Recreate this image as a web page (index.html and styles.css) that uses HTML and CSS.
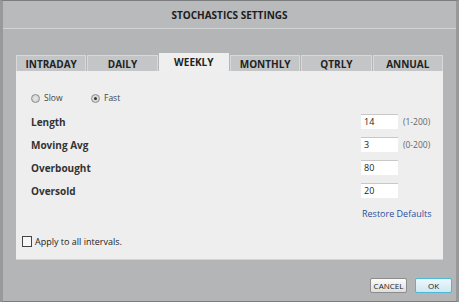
FILE: index.html
```html
<!DOCTYPE html>
<html lang="en">
<head>
    <meta charset="UTF-8">
    <title>Stochastics Settings</title>
    <link rel="stylesheet" href="styles.css">
</head>
<body>
    <div class="dialog">
        <div class="titlebar">STOCHASTICS SETTINGS</div>
        <div class="content">
            <div class="tabs">
                <div class="tab">INTRADAY</div>
                <div class="tab">DAILY</div>
                <div class="tab active">WEEKLY</div>
                <div class="tab">MONTHLY</div>
                <div class="tab">QTRLY</div>
                <div class="tab">ANNUAL</div>
            </div>
            <div class="panel">
                <div class="mode">
                    <label class="radio"><span class="dot"></span>Slow</label>
                    <label class="radio"><span class="dot checked"></span>Fast</label>
                </div>
                <div class="row">
                    <span class="name">Length</span>
                    <span class="field">14</span>
                    <span class="hint">(1-200)</span>
                </div>
                <div class="row">
                    <span class="name">Moving Avg</span>
                    <span class="field">3</span>
                    <span class="hint">(0-200)</span>
                </div>
                <div class="row">
                    <span class="name">Overbought</span>
                    <span class="field">80</span>
                    <span class="hint"></span>
                </div>
                <div class="row">
                    <span class="name">Oversold</span>
                    <span class="field">20</span>
                    <span class="hint"></span>
                </div>
                <div class="restore"><a href="#">Restore Defaults</a></div>
                <label class="apply"><span class="box"></span>Apply to all intervals.</label>
            </div>
            <div class="footer">
                <button class="btn">CANCEL</button>
                <button class="btn ok">OK</button>
            </div>
        </div>
    </div>
</body>
</html>
```

FILE: styles.css
```css
body {
    margin: 0;
    font-family: "Open Sans", "Noto Sans", sans-serif;
    background: #b4b5b7;
    color: #222;
}
.dialog {
    width: 459px;
    height: 302px;
    box-sizing: border-box;
    border: 1px solid #7c7d7f;
    border-left: 3px solid #98999b;
    border-right: 3px solid #98999b;
    background: #b4b5b7;
}
.titlebar {
    height: 27px;
    line-height: 28px;
    text-align: center;
    font-size: 10px;
    font-weight: bold;
    color: #1c1c1c;
    background: #b9babc;
    border-bottom: 1px solid #d2d3d5;
}
.content {
    padding: 24px 13px 0 13px;
}
.tabs {
    display: flex;
    gap: 1px;
    align-items: flex-end;
    height: 18px;
}
.tab {
    flex: 1;
    height: 15px;
    line-height: 16px;
    text-align: center;
    font-size: 10px;
    font-weight: bold;
    color: #222;
    background: #c4c5c7;
    border: 1px solid #d8d9db;
    border-bottom: none;
}
.tab.active {
    height: 17px;
    line-height: 17px;
    background: #efefef;
    border-color: #efefef;
}
.panel {
    height: 189px;
    box-sizing: border-box;
    background: #eeeeee;
    border-bottom: 1px solid #d4d4d4;
    padding: 22px 0 0 15px;
    position: relative;
}
.mode {
    display: flex;
    height: 17px;
    align-items: flex-start;
    font-size: 8.5px;
    line-height: 10px;
    color: #444;
}
.radio {
    display: flex;
    align-items: center;
    width: 60px;
}
.dot {
    width: 9px;
    height: 9px;
    border-radius: 50%;
    border: 1px solid #8d8d8d;
    background: radial-gradient(#e8e8e8, #c9c9c9);
    margin-right: 4px;
    box-sizing: border-box;
    position: relative;
}
.dot.checked::after {
    content: "";
    position: absolute;
    left: 2px;
    top: 2px;
    width: 3px;
    height: 3px;
    border-radius: 50%;
    background: #333;
}
.row {
    display: flex;
    align-items: center;
    height: 23px;
}
.name {
    width: 330px;
    font-size: 10px;
    font-weight: bold;
    color: #333;
}
.field {
    width: 37px;
    height: 15px;
    box-sizing: border-box;
    background: #fff;
    border-top: 1px solid #c8c8c8;
    padding-left: 3px;
    font-size: 9px;
    line-height: 14px;
    color: #222;
}
.hint {
    margin-left: 5px;
    font-size: 8.5px;
    color: #666;
}
.restore {
    padding: 5px 0 0 331px;
    font-size: 9px;
}
.restore a {
    color: #2a4f9a;
    text-decoration: none;
}
.apply {
    position: absolute;
    left: 6px;
    top: 164px;
    display: flex;
    align-items: center;
    font-size: 9px;
    color: #222;
}
.box {
    width: 8px;
    height: 9px;
    border: 1px solid #444;
    background: #f7f7f7;
    margin-right: 3px;
}
.footer {
    display: flex;
    justify-content: flex-end;
    gap: 8px;
    padding: 18px 0 0 0;
    margin-right: -9px;
}
.btn {
    height: 15px;
    padding: 0;
    font-family: "Open Sans", sans-serif;
    font-size: 8px;
    color: #222;
    background: linear-gradient(#fbfbfb, #dedede);
    border: 1px solid #8c8c8c;
    border-radius: 2px;
    width: 37px;
}
.btn.ok {
    border-color: #4fb8d8;
    background: linear-gradient(#eef8fc, #cde8f2);
}
```
